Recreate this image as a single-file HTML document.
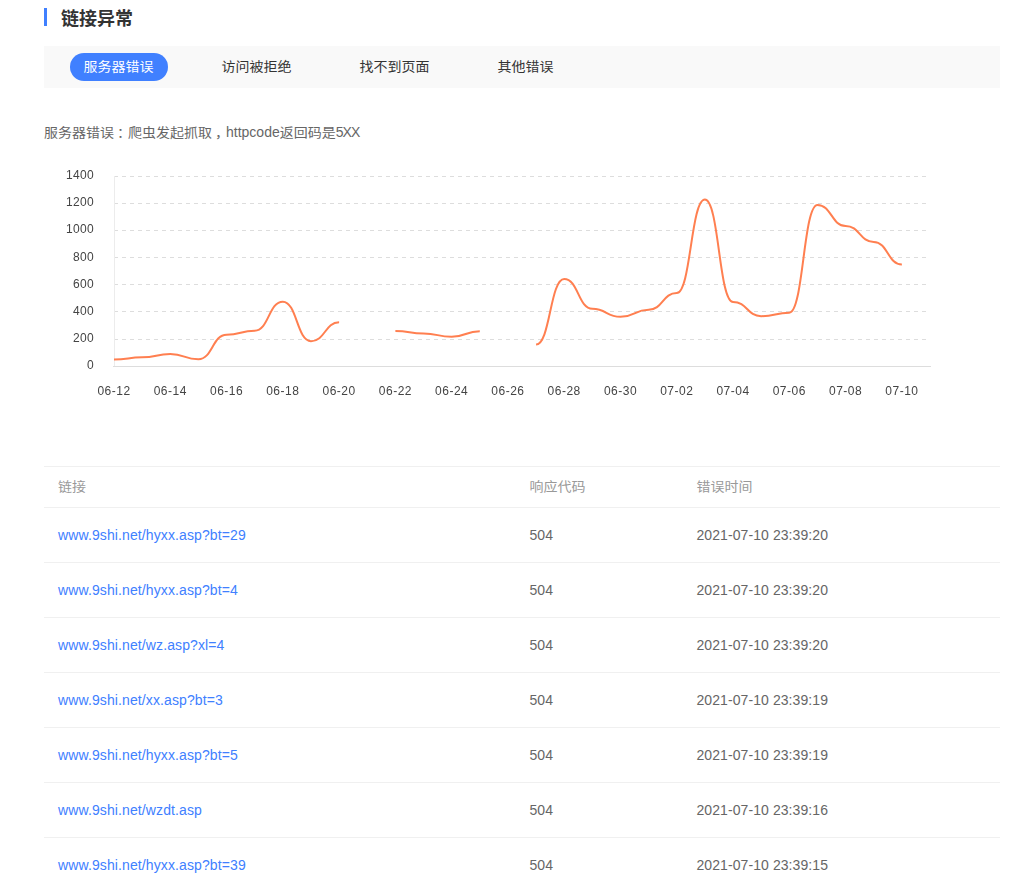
<!DOCTYPE html>
<html lang="zh-CN">
<head>
<meta charset="utf-8">
<title>链接异常</title>
<style>
html,body{margin:0;padding:0;background:#fff;}
body{width:1029px;height:892px;position:relative;overflow:hidden;font-family:"Liberation Sans","Noto Sans CJK SC",sans-serif;font-size:14px;color:#666;}
.title{position:absolute;left:44px;top:8px;height:18px;line-height:18px;border-left:3px solid #4080ff;padding-left:14px;font-size:18px;font-weight:bold;color:#333;white-space:nowrap;}
.title span{position:relative;top:1.5px;}
.tabs{position:absolute;left:44px;top:46px;width:956px;height:42px;background:#f9f9f9;}
.tabs ul{margin:0;padding:7px 0 0 26px;list-style:none;}
.tabs li{float:left;height:28px;line-height:28px;padding:0 14px;margin-right:40px;border-radius:14px;color:#333;font-size:14px;white-space:nowrap;}
.tabs li.on{background:#4080ff;color:#fff;}
.desc{position:absolute;left:44px;top:122px;height:20px;line-height:20px;font-size:14px;color:#666;white-space:nowrap;}
.desc i{font-style:normal;position:relative;left:3px;}
.desc .c{position:relative;top:-0.5px;}
.tabs .c{position:relative;top:-1px;left:-0.5px;}
.c{display:inline-block;transform:scaleY(0.9);transform-origin:50% 50%;}
.desc .n{letter-spacing:-0.9px;}
th .c{position:relative;top:-1px;}
.chart{position:absolute;left:0;top:160px;will-change:transform;}
.chart .g{stroke:#ddd;stroke-width:1;stroke-dasharray:4 4;shape-rendering:crispEdges;}
.chart .a{stroke:#ddd;stroke-width:1;shape-rendering:crispEdges;}
.chart .ya{stroke:#ececec;}
.chart text{font-family:"Liberation Sans","Noto Sans CJK SC",sans-serif;font-size:12px;fill:#444;}
.chart .yl{text-anchor:end;letter-spacing:0.3px;}
.chart .xl{text-anchor:middle;letter-spacing:0.5px;}
.chart .ln{fill:none;stroke:#ff7f50;stroke-width:2;stroke-linejoin:round;stroke-linecap:butt;}
table{position:absolute;left:44px;top:466px;width:956px;border-collapse:collapse;table-layout:fixed;border-top:1px solid #f0f0f0;}
th,td{padding:0 0 0 14px;text-align:left;font-weight:normal;font-size:14px;border-bottom:1px solid #f0f0f0;white-space:nowrap;}
th{height:40px;color:#999;}
td{height:54px;color:#666;letter-spacing:0.08px;}
td a{color:#4080ff;text-decoration:none;letter-spacing:0.11px;}
</style>
</head>
<body>
<div class="title"><span>链接异常</span></div>
<div class="tabs"><ul><li class="on"><span class="c">服务器错误</span></li><li><span class="c">访问被拒绝</span></li><li><span class="c">找不到页面</span></li><li><span class="c">其他错误</span></li></ul></div>
<div class="desc"><span class="c">服务器错误<i>：</i>爬虫发起抓取<i>，</i></span>httpcode<span class="c">返回码是</span><span class="n">5XX</span></div>
<svg class="chart" width="1029" height="260" viewBox="0 160 1029 260">
<line x1="114" y1="339.5" x2="930" y2="339.5" class="g"/>
<line x1="114" y1="311.5" x2="930" y2="311.5" class="g"/>
<line x1="114" y1="284.5" x2="930" y2="284.5" class="g"/>
<line x1="114" y1="257.5" x2="930" y2="257.5" class="g"/>
<line x1="114" y1="230.5" x2="930" y2="230.5" class="g"/>
<line x1="114" y1="203.5" x2="930" y2="203.5" class="g"/>
<line x1="114" y1="176.5" x2="930" y2="176.5" class="g"/>
<line x1="114.5" y1="176" x2="114.5" y2="366" class="a ya"/>
<line x1="113" y1="366.5" x2="931" y2="366.5" class="a"/>
<text x="94" y="368.6" class="yl">0</text>
<text x="94" y="341.6" class="yl">200</text>
<text x="94" y="314.6" class="yl">400</text>
<text x="94" y="287.6" class="yl">600</text>
<text x="94" y="260.6" class="yl">800</text>
<text x="94" y="232.6" class="yl">1000</text>
<text x="94" y="205.6" class="yl">1200</text>
<text x="94" y="178.6" class="yl">1400</text>
<text x="114.0" y="394.7" class="xl">06-12</text>
<text x="170.3" y="394.7" class="xl">06-14</text>
<text x="226.6" y="394.7" class="xl">06-16</text>
<text x="282.8" y="394.7" class="xl">06-18</text>
<text x="339.1" y="394.7" class="xl">06-20</text>
<text x="395.4" y="394.7" class="xl">06-22</text>
<text x="451.7" y="394.7" class="xl">06-24</text>
<text x="507.9" y="394.7" class="xl">06-26</text>
<text x="564.2" y="394.7" class="xl">06-28</text>
<text x="620.5" y="394.7" class="xl">06-30</text>
<text x="676.8" y="394.7" class="xl">07-02</text>
<text x="733.0" y="394.7" class="xl">07-04</text>
<text x="789.3" y="394.7" class="xl">07-06</text>
<text x="845.6" y="394.7" class="xl">07-08</text>
<text x="901.9" y="394.7" class="xl">07-10</text>
<path d="M114.00 359.61C128.07 359.61 128.07 357.31 142.14 357.31C156.21 357.31 156.21 354.05 170.28 354.05C184.34 354.05 184.34 359.21 198.41 359.21C212.48 359.21 212.48 334.64 226.55 334.64C240.62 334.64 240.62 330.71 254.69 330.71C268.76 330.71 268.76 301.66 282.83 301.66C296.90 301.66 296.90 341.16 310.97 341.16C325.03 341.16 325.03 322.29 339.10 322.29 M395.38 330.98C409.45 330.98 409.45 333.42 423.52 333.42C437.59 333.42 437.59 336.81 451.66 336.81C465.72 336.81 465.72 331.25 479.79 331.25 M536.07 344.55C550.14 344.55 550.14 279.00 564.21 279.00C578.28 279.00 578.28 308.86 592.34 308.86C606.41 308.86 606.41 316.86 620.48 316.86C634.55 316.86 634.55 309.81 648.62 309.81C662.69 309.81 662.69 292.98 676.76 292.98C690.83 292.98 690.83 199.61 704.90 199.61C718.97 199.61 718.97 301.94 733.03 301.94C747.10 301.94 747.10 316.19 761.17 316.19C775.24 316.19 775.24 312.66 789.31 312.66C803.38 312.66 803.38 204.90 817.45 204.90C831.52 204.90 831.52 225.94 845.59 225.94C859.66 225.94 859.66 241.95 873.72 241.95C887.79 241.95 887.79 264.61 901.86 264.61" class="ln"/>
</svg>
<table>
<colgroup><col style="width:471.5px"><col style="width:167px"><col></colgroup>
<thead><tr><th><span class="c">链接</span></th><th><span class="c">响应代码</span></th><th><span class="c">错误时间</span></th></tr></thead>
<tbody>
<tr><td><a>www.9shi.net/hyxx.asp?bt=29</a></td><td>504</td><td>2021-07-10 23:39:20</td></tr>
<tr><td><a>www.9shi.net/hyxx.asp?bt=4</a></td><td>504</td><td>2021-07-10 23:39:20</td></tr>
<tr><td><a>www.9shi.net/wz.asp?xl=4</a></td><td>504</td><td>2021-07-10 23:39:20</td></tr>
<tr><td><a>www.9shi.net/xx.asp?bt=3</a></td><td>504</td><td>2021-07-10 23:39:19</td></tr>
<tr><td><a>www.9shi.net/hyxx.asp?bt=5</a></td><td>504</td><td>2021-07-10 23:39:19</td></tr>
<tr><td><a>www.9shi.net/wzdt.asp</a></td><td>504</td><td>2021-07-10 23:39:16</td></tr>
<tr><td><a>www.9shi.net/hyxx.asp?bt=39</a></td><td>504</td><td>2021-07-10 23:39:15</td></tr>
</tbody>
</table>
</body>
</html>
